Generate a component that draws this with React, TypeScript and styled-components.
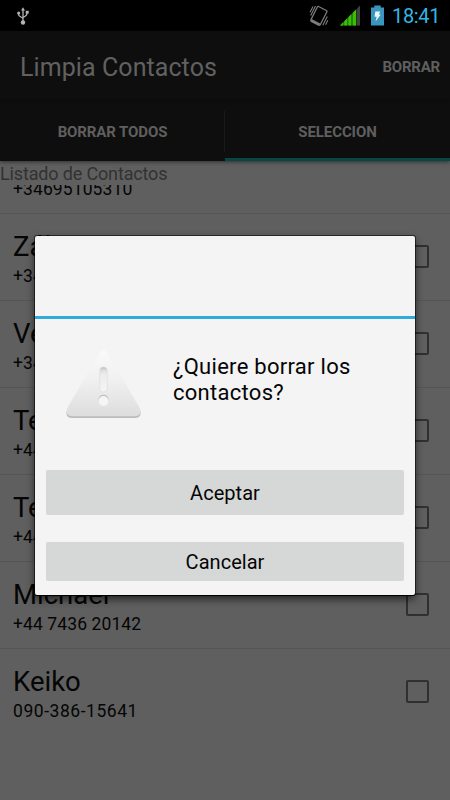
import React from "react";
import styled, { createGlobalStyle } from "styled-components";

const GlobalStyle = createGlobalStyle`
  * { box-sizing: border-box; }
  body { margin: 0; background: #5f5f5f; font-family: Roboto, "Noto Sans", sans-serif; }
`;

const Screen = styled.div`
  position: relative;
  width: 450px;
  height: 800px;
  overflow: hidden;
  display: flex;
  flex-direction: column;
  background: #5f5f5f;
`;

const StatusBar = styled.header`
  height: 31px;
  flex: none;
  display: flex;
  align-items: center;
  justify-content: space-between;
  background: #000;
  padding: 0 9px 0 16px;
`;

const StatusIcons = styled.div`
  display: flex;
  align-items: center;
  gap: 11px;
`;

const Clock = styled.span`
  width: 49px;
  margin-left: -3px;
  padding-top: 1px;
  font-size: 20px;
  line-height: 31px;
  letter-spacing: -0.35px;
  color: #33b5e5;
  white-space: nowrap;
`;

const ActionBar = styled.div`
  height: 72px;
  flex: none;
  display: flex;
  align-items: center;
  justify-content: space-between;
  padding: 0 10px 0 20px;
  background: #0e0e0e;
`;

const Title = styled.h1`
  margin: 0;
  padding-top: 2px;
  font-size: 25px;
  font-weight: 400;
  line-height: 32px;
  letter-spacing: 0.08px;
  color: #616161;
  white-space: nowrap;
`;

const Action = styled.span`
  font-size: 15px;
  font-weight: 700;
  letter-spacing: -0.2px;
  color: #5f5f5f;
`;

const Tabs = styled.nav`
  height: 58px;
  flex: none;
  display: grid;
  grid-template-columns: 1fr 1fr;
  align-items: stretch;
  background: #0e0e0e;
  z-index: 1;
  box-shadow: 0 1px 4px rgba(0, 0, 0, 0.5);
`;

const Tab = styled.div<{ $active?: boolean }>`
  position: relative;
  display: flex;
  align-items: center;
  justify-content: center;
  padding-top: 2px;
  font-size: 15px;
  font-weight: 700;
  letter-spacing: -0.1px;
  color: #5f5f5f;
  border-bottom: 3px solid ${(p) => (p.$active ? "#094842" : "#0e0e0e")};
`;

const TabDivider = styled.span`
  position: absolute;
  right: 0;
  top: 8px;
  bottom: 6px;
  width: 1px;
  background: #1a1a1a;
`;

const SectionLabel = styled.div`
  height: 24px;
  flex: none;
  font-size: 18px;
  line-height: 26px;
  letter-spacing: -0.15px;
  color: #323232;
`;

const List = styled.div`
  flex: 1;
  min-height: 0;
  overflow: hidden;
`;

const Rows = styled.div`
  margin-top: -58px;
`;

const Row = styled.div`
  height: 87px;
  display: flex;
  align-items: flex-start;
  justify-content: space-between;
  padding: 0 21px 0 13px;
  border-bottom: 1px solid #555;

  &:last-child {
    border-bottom-color: transparent;
  }
`;

const Contact = styled.div`
  display: flex;
  flex-direction: column;
  padding-top: 17px;
`;

const Name = styled.span`
  height: 32px;
  font-size: 27.5px;
  line-height: 32px;
  color: #050505;
`;

const Phone = styled.span<{ $tracking: number }>`
  height: 24px;
  margin-top: 1px;
  font-size: 17.5px;
  line-height: 24px;
  letter-spacing: ${(p) => p.$tracking}px;
  color: #050505;
`;

const CheckBox = styled.span`
  width: 23px;
  height: 23px;
  margin-top: 31px;
  border: 2px solid #303030;
  border-radius: 2px;
`;

const Dialog = styled.section`
  position: absolute;
  left: 35px;
  top: 236px;
  z-index: 2;
  width: 380px;
  height: 359px;
  display: flex;
  flex-direction: column;
  background: #f4f4f4;
  border-radius: 2px;
  box-shadow: 0 0 0 1px rgba(0, 0, 0, 0.55), 0 1px 0 0 #000, 0 4px 9px rgba(0, 0, 0, 0.65);
`;

const DialogHeader = styled.div`
  height: 83px;
  flex: none;
  border-bottom: 3px solid #33aadc;
`;

const Message = styled.div`
  height: 151px;
  flex: none;
  display: flex;
  align-items: flex-start;
  padding: 30px 0 0 28px;
`;

const Question = styled.p`
  margin: 5px 0 0 30px;
  width: 200px;
  font-size: 22px;
  line-height: 26px;
  letter-spacing: 0.28px;
  color: #050505;
`;

const Button = styled.button<{ $height: number }>`
  display: block;
  flex: none;
  width: 358px;
  height: ${(p) => p.$height}px;
  margin: 0 0 27px 11px;
  padding: 0;
  border: 0;
  border-radius: 2px;
  background: #d6d8d7;
  font: 400 20px/24px Roboto, "Noto Sans", sans-serif;
  letter-spacing: 0.03px;
  color: #050505;
`;

const UsbIcon = () => (
  <svg width="14" height="18" viewBox="0 0 14 18" fill="none" stroke="#b4b4b4" strokeWidth="1.3">
    <path d="M7 3v11M7 11.5C5 9.500 2.500 9.500 2.500 7.500V6M7 10.500c2-1.500 4-1.500 4-4V5" />
    <path d="M7 .3 9 3.500H5z" fill="#b4b4b4" stroke="none" />
    <circle cx="7" cy="15.500" r="2.200" fill="#b4b4b4" stroke="none" />
    <circle cx="2.700" cy="6" r="1.500" fill="#b4b4b4" stroke="none" />
    <path d="M9.700 3.800h3v2.800h-3z" fill="#b4b4b4" stroke="none" />
  </svg>
);

const VibrateIcon = () => (
  <svg width="20" height="22" viewBox="0 0 20 22" fill="none" stroke="#7c7c7c" strokeWidth="1.300">
    <path d="M9.600 1.500 17.300 5.500Q18.300 6 17.800 7L11.500 19.300Q10.900 20.600 9.700 20L2.500 16.400Q1.400 15.800 2 14.600L8.200 2.200Q8.700 1.100 9.600 1.500Z" />
    <path d="M2 15.300 10.600 19.700" strokeWidth="2.800" />
    <path d="M6.500 1 1.700 10.400M4 1.500 1 7.300M18.300 11.500 13.800 20.300M18.800 15.300 16.600 19.800" strokeWidth="1.100" />
  </svg>
);

const SignalIcon = () => (
  <svg width="20" height="21" viewBox="0 0 20 21">
    <path d="M0 20.500 16.500 4V20.500Z" fill="#238406" />
    <path d="M0 20.500 3 17.500V20.500ZM4.300 16.200 7 13.500V20.500H4.300ZM8.500 12 11 9.500V20.500H8.500ZM13 7.500 16 4.500V20.500H13Z" fill="#3bbc05" />
    <path d="M17 3.500 20 .5V20.500H17Z" fill="#414141" />
  </svg>
);

const BatteryIcon = () => (
  <svg width="13" height="21" viewBox="0 0 13 21">
    <path d="M3.300.5h6.400v2H13v18H0v-18h3.300z" fill="#3997bd" />
    <path d="M4.300 6.500h5L7.800 9.600h2L4.600 16.500l1-4.700H3.500z" fill="#edf6fa" />
  </svg>
);

const WarningIcon = () => (
  <svg width="80" height="72" viewBox="0 0 80 72">
    <defs>
      <linearGradient id="face" x1="0" y1="0" x2="0" y2="1">
        <stop offset="0" stopColor="#fafafa" />
        <stop offset=".45" stopColor="#f0f0f0" />
        <stop offset="1" stopColor="#dddddd" />
      </linearGradient>
      <linearGradient id="cut" x1="0" y1="0" x2="0" y2="1">
        <stop offset="0" stopColor="#bebebe" />
        <stop offset=".14" stopColor="#dedede" />
        <stop offset=".3" stopColor="#ececec" />
        <stop offset="1" stopColor="#f5f5f5" />
      </linearGradient>
    </defs>
    <path d="M36.500 5Q40.500-1 44.500 5L76.700 60.500Q80 69 71 69H10Q1 69 4.300 60.500Z" fill="#bcbcbc" />
    <path d="M36.500 4Q40.500-2 44.500 4L76.700 59Q80 67.300 71 67.300H10Q1 67.300 4.300 59Z" fill="url(#face)" />
    <rect x="36.700" y="18" width="7.600" height="25" rx="3.800" fill="url(#cut)" stroke="#dadada" strokeWidth=".6" />
    <circle cx="40.500" cy="50.700" r="5" fill="#bebebe" />
    <circle cx="40.500" cy="52" r="4.900" fill="#f5f5f5" />
  </svg>
);

const contacts = [
  { name: "Zoe", phone: "+34695105310", tracking: 0.1 },
  { name: "Zález", phone: "+34695105311", tracking: 0.1 },
  { name: "Vera", phone: "+34695105312", tracking: 0.1 },
  { name: "Teresa", phone: "+44 7436 20140", tracking: 0.1 },
  { name: "Teo", phone: "+44 7436 20141", tracking: 0.1 },
  { name: "Michael", phone: "+44 7436 20142", tracking: 0.1 },
  { name: "Keiko", phone: "090-386-15641", tracking: 0.55 },
];

export default function App() {
  return (
    <>
      <GlobalStyle />
      <Screen>
        <StatusBar>
          <UsbIcon />
          <StatusIcons>
            <VibrateIcon />
            <SignalIcon />
            <BatteryIcon />
            <Clock>18:41</Clock>
          </StatusIcons>
        </StatusBar>
        <ActionBar>
          <Title>Limpia Contactos</Title>
          <Action>BORRAR</Action>
        </ActionBar>
        <Tabs>
          <Tab>
            BORRAR TODOS
            <TabDivider />
          </Tab>
          <Tab $active>SELECCION</Tab>
        </Tabs>
        <SectionLabel>Listado de Contactos</SectionLabel>
        <List>
          <Rows>
            {contacts.map((c) => (
              <Row key={c.phone}>
                <Contact>
                  <Name>{c.name}</Name>
                  <Phone $tracking={c.tracking}>{c.phone}</Phone>
                </Contact>
                <CheckBox />
              </Row>
            ))}
          </Rows>
        </List>
        <Dialog role="dialog">
          <DialogHeader />
          <Message>
            <WarningIcon />
            <Question>¿Quiere borrar los contactos?</Question>
          </Message>
          <Button $height={45}>Aceptar</Button>
          <Button $height={39}>Cancelar</Button>
        </Dialog>
      </Screen>
    </>
  );
}
